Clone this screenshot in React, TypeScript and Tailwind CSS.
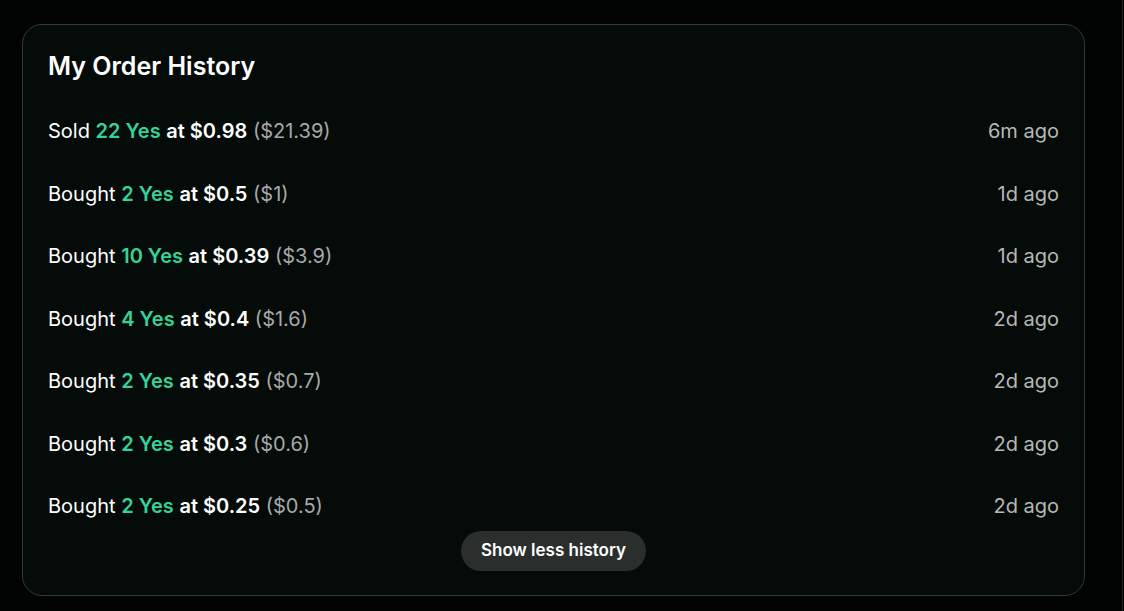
const orders = [
  { side: 'Sold', qty: 22, price: '0.98', total: '21.39', ago: '6m ago' },
  { side: 'Bought', qty: 2, price: '0.5', total: '1', ago: '1d ago' },
  { side: 'Bought', qty: 10, price: '0.39', total: '3.9', ago: '1d ago' },
  { side: 'Bought', qty: 4, price: '0.4', total: '1.6', ago: '2d ago' },
  { side: 'Bought', qty: 2, price: '0.35', total: '0.7', ago: '2d ago' },
  { side: 'Bought', qty: 2, price: '0.3', total: '0.6', ago: '2d ago' },
  { side: 'Bought', qty: 2, price: '0.25', total: '0.5', ago: '2d ago' },
];

export default function App() {
  return (
    <div className="min-h-screen w-full bg-[#020303] font-['Inter',sans-serif]">
      <div className="h-[611px] w-[1123px] border-r border-[#1e2120] pl-[22px] pt-[24px]">
        <div className="w-[1063px] rounded-[20px] border border-[#303a36] bg-[#040b08] px-[25px] pt-[25px] pb-6">
          <h2 className="text-[25px] font-semibold leading-8 text-white">My Order History</h2>
          <ul className="mt-[35px] flex flex-col gap-[34.5px]">
            {orders.map((o, i) => (
              <li key={i} className="flex h-7 items-center justify-between text-[20px] leading-7">
                <span className="text-white">
                  {o.side} <span className="font-semibold text-[#34d399]">{o.qty} Yes</span>{' '}
                  <span className="font-semibold">at ${o.price}</span>{' '}
                  <span className="text-[#a8a8a8]">(${o.total})</span>
                </span>
                <span className="text-[#b8b8b8]">{o.ago}</span>
              </li>
            ))}
          </ul>
          <div className="mt-[11px] flex justify-center">
            <button className="h-10 rounded-full bg-[#2a2f2d] px-5 text-[17px] font-semibold text-white">
              Show less history
            </button>
          </div>
        </div>
      </div>
    </div>
  );
}
